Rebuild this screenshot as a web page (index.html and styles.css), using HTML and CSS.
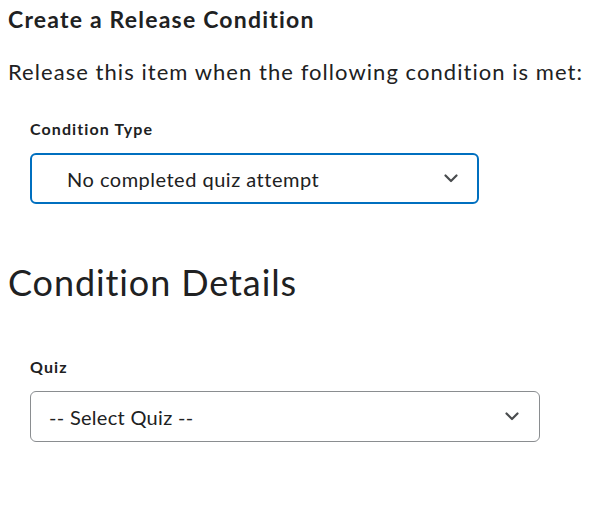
FILE: index.html
```html
<!DOCTYPE html>
<html lang="en">
<head>
<meta charset="utf-8">
<title>Create a Release Condition</title>
<link rel="stylesheet" href="styles.css">
</head>
<body>
<div class="page">
  <h1 class="title">Create a Release Condition</h1>
  <p class="intro">Release this item when the following condition is met:</p>
  <div class="field">
    <div class="label">Condition Type</div>
    <div class="select select-focus">
      <span class="select-text indent">No completed quiz attempt</span>
      <svg class="chevron" width="14" height="9" viewBox="0 0 14 9"><path d="M1.5 1.5 L7 7 L12.5 1.5" fill="none" stroke="#494c4e" stroke-width="2.2" stroke-linecap="round" stroke-linejoin="round"/></svg>
    </div>
  </div>
  <h2 class="section">Condition Details</h2>
  <div class="field field-quiz">
    <div class="label">Quiz</div>
    <div class="select select-wide">
      <span class="select-text select-text-tight">-- Select Quiz --</span>
      <svg class="chevron" width="14" height="9" viewBox="0 0 14 9"><path d="M1.5 1.5 L7 7 L12.5 1.5" fill="none" stroke="#494c4e" stroke-width="2.2" stroke-linecap="round" stroke-linejoin="round"/></svg>
    </div>
  </div>
</div>
</body>
</html>
```

FILE: styles.css
```css
html, body {
  margin: 0;
  padding: 0;
  background: #ffffff;
}
body {
  font-family: Lato, "Noto Sans", sans-serif;
  color: #202122;
}
.page {
  padding: 5px 8px 0 8px;
}
.title {
  margin: 0;
  font-size: 23px;
  line-height: 28px;
  font-weight: 700;
  letter-spacing: 1.2px;
  white-space: nowrap;
  color: #202122;
}
.intro {
  margin: 25px 0 0 0;
  font-size: 22px;
  line-height: 28px;
  letter-spacing: 1.05px;
  white-space: nowrap;
  color: #202122;
}
.field {
  padding-left: 22px;
}
.label {
  margin-top: 33px;
  font-size: 16px;
  line-height: 20px;
  font-weight: 700;
  letter-spacing: 1.1px;
  color: #202122;
}
.field-quiz .label {
  margin-top: 53px;
}
.select {
  margin-top: 14px;
  box-sizing: border-box;
  display: flex;
  align-items: center;
  justify-content: space-between;
  height: 51px;
  border: 1px solid #8a8d90;
  border-radius: 6px;
  padding: 0 20px 0 18px;
  font-size: 20px;
  color: #202122;
}
.select-focus {
  width: 449px;
  border: 2px solid #006fbf;
  padding: 0 19px 0 17px;
}
.select-wide {
  width: 510px;
}
.indent {
  padding-left: 18px;
}
.select-text {
  line-height: 24px;
  letter-spacing: 0.5px;
}
.select-text-tight {
  letter-spacing: 0.3px;
}
.chevron {
  display: block;
  flex: none;
}
.section {
  margin: 56px 0 0 0;
  font-size: 36px;
  line-height: 44px;
  font-weight: 400;
  letter-spacing: 0.9px;
  color: #202122;
}
```
